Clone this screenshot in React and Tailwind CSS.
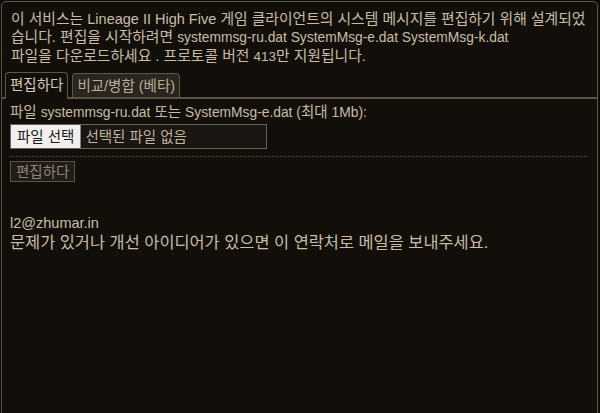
export default function App() {
  return (
    <div
      className="w-[600px] h-[413px] bg-[#0d0b08] text-[#c8bca6] text-[14.8px] leading-[18px] overflow-hidden"
      style={{ fontFamily: '"Liberation Sans", "Noto Sans CJK KR", sans-serif' }}
    >
      <div className="h-[420px] ml-px mr-[2px] mt-px border border-[#5e5648] rounded-[5px] bg-[#120f0b]">
        <div className="px-[9px] pt-[8px] whitespace-nowrap">
          <div>
            이 서비스는 <span className="text-[14.5px]">Lineage II High Five</span> 게임 클라이언트의 시스템 메시지를 편집하기 위해 설계되었
          </div>
          <div>
            습니다. 편집을 시작하려면 <span className="text-[13.8px]">systemmsg-ru.dat SystemMsg-e.dat SystemMsg-k.dat</span>
          </div>
          <div>
            파일을 다운로드하세요 . 프로토콜 버전 <span className="text-[13.5px]">413</span>만 지원됩니다.
          </div>
        </div>

        {/* tabs */}
        <div className="mt-[6px] flex items-end gap-[4px] px-[4px] border-b-2 border-[#57514a] -mx-px text-[14.5px]">
          <div className="px-[4px] flex items-center border border-b-0 border-[#5e5648] rounded-t-[4px] bg-[#120f0b] text-[#d6cbb6] -mb-[2px] pb-[2px] h-[27px]">
            편집하다
          </div>
          <div className="px-[4px] h-[24px] flex items-center border border-b-0 border-[#5e5648] rounded-t-[4px] bg-[#2a251f] text-[#b8ad98]">
            비교/병합 (베타)
          </div>
        </div>

        <div className="px-[8px] pt-[4px] text-[14.5px]">
          <div>
            파일 <span className="text-[13.8px]">systemmsg-ru.dat</span> 또는 <span className="text-[13.8px]">SystemMsg-e.dat (</span>최대 <span className="text-[13.8px]">1Mb):</span>
          </div>
          <div className="mt-[2px] w-[257px] h-[25px] flex items-center border border-[#6a6256] bg-[#1a1612]">
            <span className="h-full px-[6px] flex items-center bg-[#f2f0ec] text-[#1a1a1a] border-r border-[#8a8478]">파일 선택</span>
            <span className="ml-[4px] text-[#bfb39e]">선택된 파일 없음</span>
          </div>
          <div className="mt-[7px] border-t border-dotted border-[#5a5246] mr-[2px]" />
          <div className="mt-[4px]">
            <span className="inline-flex items-center h-[21px] px-[5px] border border-[#5a5246] bg-[#211c17] text-[#8f8677]">편집하다</span>
          </div>
          <div className="mt-[32px]">l2@zhumar.in</div>
          <div className="text-[16.4px] leading-[20px]">문제가 있거나 개선 아이디어가 있으면 이 연락처로 메일을 보내주세요.</div>
        </div>
      </div>
    </div>
  );
}
